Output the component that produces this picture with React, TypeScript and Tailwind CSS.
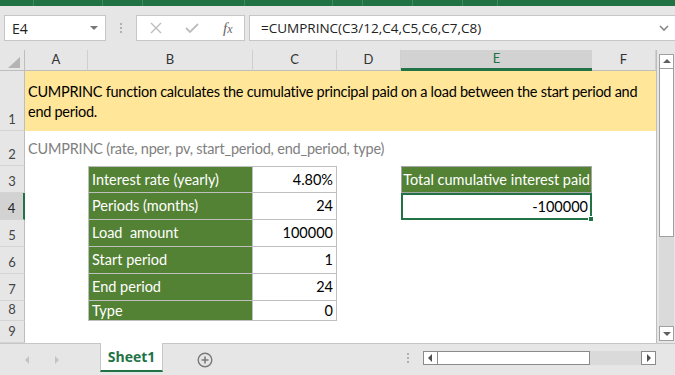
import React from 'react';

const RowHead = ({ n, active }: { n: number; active?: boolean }) => (
  <div
    className={`flex items-end justify-center pb-[1px] border-b border-[#d4d4d4] text-[13px] ${
      active ? 'bg-[#d2d2d2] border-r-2 border-r-[#217346] text-[#222]' : 'bg-[#e6e6e6] border-r border-r-[#bdbdbd] text-[#444]'
    }`}
  >
    {n}
  </div>
);

const ColHead = ({ label, active }: { label: string; active?: boolean }) => (
  <div
    className={`flex items-center justify-center text-[13px] ${
      active
        ? 'bg-[#d2d2d2] border-b-[3px] border-[#217346] text-[#217346]'
        : 'bg-[#e6e6e6] border-r border-r-[#cfcfcf] border-b border-b-[#bdbdbd] text-[#333]'
    }`}
  >
    {label}
  </div>
);

const table = [
  ['Interest rate (yearly)', '4.80%'],
  ['Periods (months)', '24'],
  ['Load  amount', '100000'],
  ['Start period', '1'],
  ['End period', '24'],
  ['Type', '0'],
];

const Tri = ({ dir, color = '#555' }: { dir: 'up' | 'down' | 'left' | 'right'; color?: string }) => {
  const pts = {
    up: '1,6 5,2 9,6',
    down: '1,3 5,7 9,3',
    left: '6,1 2,5 6,9',
    right: '3,1 7,5 3,9',
  }[dir];
  return (
    <svg width="10" height="10" viewBox="0 0 10 10">
      <polygon points={pts} fill={color} />
    </svg>
  );
};

const Dots = () => (
  <div className="flex flex-col gap-[2px]">
    <div className="w-[2px] h-[2px] bg-[#b0b0b0]" />
    <div className="w-[2px] h-[2px] bg-[#b0b0b0]" />
    <div className="w-[2px] h-[2px] bg-[#b0b0b0]" />
  </div>
);

export default function App() {
  return (
    <div className="w-[675px] h-[375px] overflow-hidden bg-[#e6e6e6] flex flex-col font-['Open_Sans',sans-serif]">
      {/* ribbon edge */}
      <div className="h-[6px] bg-[#217346] flex">
        {[34, 69, 40, 102, 88, 30, 50, 50, 35].map((w, i) => (
          <div key={i} className="border-r border-[#3c8a5d]" style={{ width: w }} />
        ))}
      </div>

      {/* formula bar */}
      <div className="h-[44px] flex items-center pl-[4px]">
        <div className="w-[102px] h-[26px] bg-white border border-[#c6c6c6] flex items-center justify-between pl-[7px] pr-[6px] text-[14px] text-[#222]">
          <span>E4</span>
          <Tri dir="down" color="#777" />
        </div>
        <div className="w-[30px] flex justify-center">
          <Dots />
        </div>
        <div className="w-[109px] h-[26px] bg-white border border-[#c6c6c6] flex items-center">
          <svg width="12" height="12" viewBox="0 0 12 12" className="ml-[13px]">
            <path d="M1 1 L11 11 M11 1 L1 11" stroke="#bdbdbd" strokeWidth="1.4" />
          </svg>
          <svg width="14" height="12" viewBox="0 0 14 12" className="ml-[23px]">
            <path d="M1 6 L5 10 L13 2" stroke="#bdbdbd" strokeWidth="1.8" fill="none" />
          </svg>
          <span className="ml-[24px] text-[15px] italic text-[#666] font-['Liberation_Serif',serif] leading-none">
            f<span className="text-[12px]">x</span>
          </span>
        </div>
        <div className="ml-[4px] flex-1 h-[26px] bg-white border border-[#c6c6c6] border-r-0 flex items-center justify-between pl-[11px] pr-[6px] text-[13.5px] text-[#222]">
          <span>=CUMPRINC(C3/12,C4,C5,C6,C7,C8)</span>
          <svg width="10" height="8" viewBox="0 0 10 8">
            <path d="M1 2 L5 6 L9 2" stroke="#888" strokeWidth="1.6" fill="none" />
          </svg>
        </div>
      </div>

      {/* sheet */}
      <div className="flex h-[293px]">
        <div className="grid grid-cols-[25px_63px_165px_84px_64px_191px_64px] grid-rows-[21px_60px_35px_27px_27px_27px_27px_27px_20px_22px] bg-white border-r border-[#bdbdbd] font-[Lato,sans-serif] text-[14.5px]">
          {/* header row */}
          <div className="bg-[#e6e6e6] border-r border-[#bdbdbd] border-b border-b-[#bdbdbd] flex items-end justify-end pr-[4px] pb-[2px]">
            <svg width="12" height="11" viewBox="0 0 12 11">
              <polygon points="12,0 12,11 0,11" fill="#b4b4b4" />
            </svg>
          </div>
          <ColHead label="A" />
          <ColHead label="B" />
          <ColHead label="C" />
          <ColHead label="D" />
          <ColHead label="E" active />
          <ColHead label="F" />

          {/* row 1 */}
          <RowHead n={1} />
          <div className="col-span-6 bg-[#ffe699] flex items-center pl-[3px] pt-[2px] leading-[20px] text-black whitespace-nowrap tracking-[-0.27px]">
            <div>
              CUMPRINC function calculates the cumulative principal paid on a load between the start period and
              <br />
              end period.
            </div>
          </div>

          {/* row 2 */}
          <RowHead n={2} />
          <div className="col-span-6 flex items-center pl-[3px] text-[#808080] whitespace-nowrap tracking-[-0.2px]">
            CUMPRINC (rate, nper, pv, start_period, end_period, type)
          </div>

          {/* rows 3-8 */}
          {table.map(([label, value], i) => {
            const r = i + 3;
            return (
              <React.Fragment key={r}>
                <RowHead n={r} active={r === 4} />
                <div />
                <div
                  className={`bg-[#548235] text-white flex items-center pl-[3px] border-l border-r border-b border-[#bfbfbf] whitespace-pre ${
                    r === 3 ? 'border-t' : ''
                  }`}
                >
                  {label}
                </div>
                <div
                  className={`flex items-center justify-end pr-[3px] border-r border-b border-[#bfbfbf] text-black ${
                    r === 3 ? 'border-t' : ''
                  }`}
                >
                  {value}
                </div>
                <div />
                {r === 3 ? (
                  <div className="bg-[#548235] text-white flex items-center justify-center border border-[#a6a6a6]">
                    Total cumulative interest paid
                  </div>
                ) : r === 4 ? (
                  <div className="relative border-2 border-[#217346] flex items-center justify-end pr-[2px] text-black">
                    -100000
                    <div className="absolute -right-[4px] -bottom-[4px] w-[6px] h-[6px] bg-[#217346] border border-white" />
                  </div>
                ) : (
                  <div />
                )}
                <div />
              </React.Fragment>
            );
          })}

          {/* row 9 */}
          <RowHead n={9} />
          <div className="col-span-6" />
        </div>

        {/* vertical scrollbar */}
        <div className="ml-[2px] w-[15px] flex flex-col pt-[4px] pb-[2px] bg-[#e6e6e6]">
          <div className="h-[15px] bg-white border border-[#a0a0a0] flex items-center justify-center">
            <Tri dir="up" color="#606060" />
          </div>
          <div className="h-[168px] bg-white border-x border-b border-[#a0a0a0]" />
          <div className="flex-1 bg-[#dadada]" />
          <div className="h-[15px] bg-white border border-[#a0a0a0] flex items-center justify-center">
            <Tri dir="down" color="#606060" />
          </div>
        </div>
      </div>

      {/* sheet tabs */}
      <div className="flex-1 flex items-stretch border-t border-[#c6c6c6] bg-[#e6e6e6]">
        <div className="w-[100px] flex items-center gap-[19px] pl-[23px]">
          <Tri dir="left" color="#c4c4c4" />
          <Tri dir="right" color="#c4c4c4" />
        </div>
        <div className="w-[63px] bg-white border-x border-[#c6c6c6] border-b-2 border-b-[#217346] -mt-[1px] mb-[3px] flex items-center justify-center text-[14px] font-bold text-[#217346]">
          Sheet1
        </div>
        <div className="w-[84px] flex items-center justify-center">
          <svg width="16" height="16" viewBox="0 0 16 16">
            <circle cx="8" cy="8" r="6.8" stroke="#7a7a7a" strokeWidth="1.4" fill="none" />
            <path d="M8 4.5 V11.5 M4.5 8 H11.5" stroke="#7a7a7a" strokeWidth="1.6" />
          </svg>
        </div>
        <div className="flex-1 flex items-center justify-end pr-[19px]">
          <div className="mr-[14px] mb-[3px]">
            <Dots />
          </div>
          <div className="w-[233px] h-[14px] flex mb-[3px]">
            <div className="w-[15px] bg-white border border-[#8a8a8a] flex items-center justify-center">
              <Tri dir="left" color="#505050" />
            </div>
            <div className="w-[152px] bg-white border-y border-r border-[#8a8a8a]" />
            <div className="flex-1 bg-[#dadada]" />
            <div className="w-[15px] bg-white border border-[#8a8a8a] flex items-center justify-center">
              <Tri dir="right" color="#505050" />
            </div>
          </div>
        </div>
      </div>
    </div>
  );
}
